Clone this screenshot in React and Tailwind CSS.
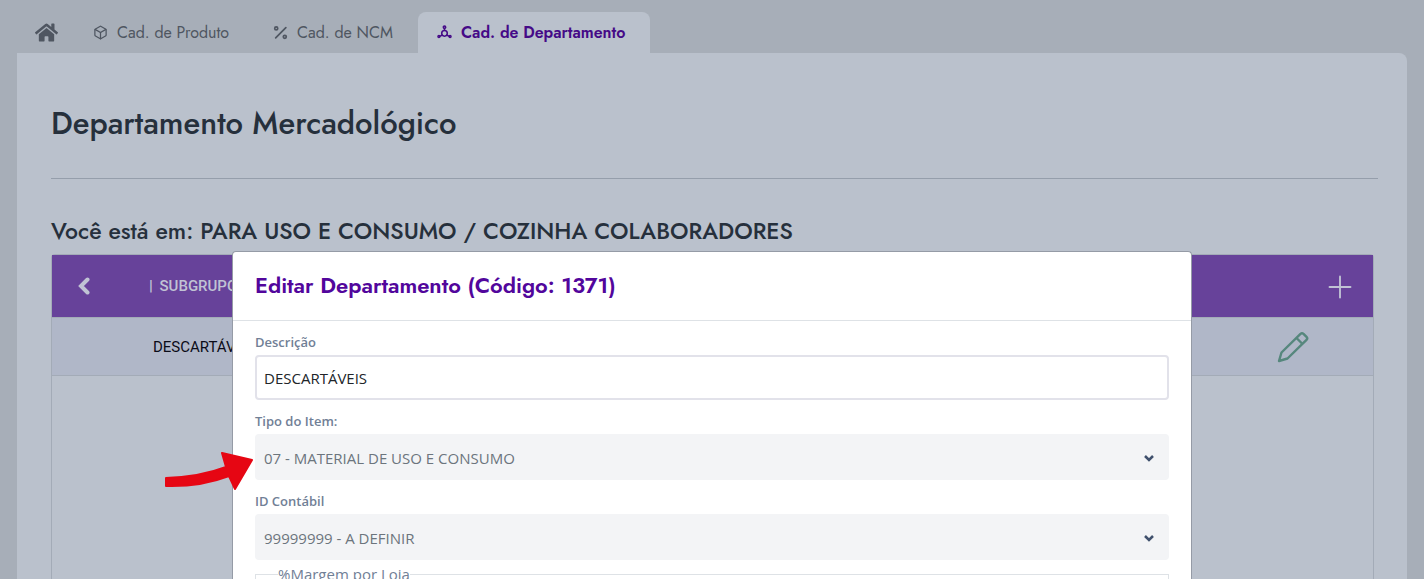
import { useState } from 'react';
import { FaHome } from 'react-icons/fa';
import { Box, Plus } from 'lucide-react';

const PercentIcon = ({ className }) => (
  <svg viewBox="0 0 14 14" className={className} fill="none" stroke="currentColor" strokeWidth="1.6">
    <path d="M12 2.500 2.500 12" strokeLinecap="round" />
    <circle cx="3" cy="3.2" r="1.4" />
    <circle cx="11" cy="11" r="1.4" />
  </svg>
);

const NodesIcon = ({ className }) => (
  <svg viewBox="0 0 14 14" className={className} fill="none" stroke="currentColor" strokeWidth="1.4">
    <circle cx="7" cy="2" r="1.1" />
    <circle cx="7" cy="7.8" r="2.6" />
    <circle cx="1.8" cy="10.8" r="0.9" />
    <circle cx="12.2" cy="10.8" r="0.9" />
    <path d="M7 3v2.500M5 9.300l-3 1.500M9 9.300l3 1.500" />
  </svg>
);

const PencilIcon = ({ className }) => (
  <svg
    viewBox="0 0 32 32"
    className={className}
    fill="none"
    stroke="currentColor"
    strokeWidth="2.4"
    strokeLinejoin="round"
  >
    <path d="M2 30L4.500 21.500L23.500 2.800Q25 1.500 26.500 2.800L29.500 5.800Q31 7.300 29.500 8.800L10.500 27.500Z" />
    <path d="M19.500 7L25 12.500" />
  </svg>
);

const tabs = [
  { id: 'produto', label: 'Cad. de Produto', icon: Box },
  { id: 'ncm', label: 'Cad. de NCM', icon: PercentIcon },
  { id: 'departamento', label: 'Cad. de Departamento', icon: NodesIcon },
];

function Tabs({ active, onChange }) {
  return (
    <nav className="flex h-[53px] items-end pl-[35px] font-['Jost','Lato',sans-serif] text-[16px] text-[#4f5661]">
      <a href="#inicio" aria-label="Início" className="flex h-[41px] items-center pr-4">
        <FaHome className="size-[23px]" />
      </a>
      {tabs.map(({ id, label, icon: Icon }) => (
        <button
          key={id}
          type="button"
          onClick={() => onChange(id)}
          className={`flex h-[41px] items-center gap-[9px] rounded-t-lg pr-[25px] pl-[19px] whitespace-nowrap ${
            active === id ? 'bg-[#bac1cc] font-semibold text-[#450a87]' : ''
          }`}
        >
          <Icon className="size-[15px]" />
          {label}
        </button>
      ))}
    </nav>
  );
}

function SelectField({ id, label, option }) {
  return (
    <div className="mt-3">
      <label htmlFor={id} className="block h-[22px] text-[13px] leading-[19px] font-semibold text-[#718096]">
        {label}
      </label>
      <div className="relative">
        <select
          id={id}
          className="block h-[46px] w-full appearance-none rounded bg-[#f3f4f6] px-[9px] pt-0.5 text-[15px] text-[#6c757d]"
        >
          <option>{option}</option>
        </select>
        <svg
          viewBox="0 0 10 7"
          className="pointer-events-none absolute top-[21px] right-[15px] h-[7px] w-[10px]"
          fill="none"
          stroke="#40516d"
          strokeWidth="2.5"
        >
          <path d="M1 1l4 4 4-4" />
        </svg>
      </div>
    </div>
  );
}

function EditarDepartamento() {
  const [descricao, setDescricao] = useState('DESCARTÁVEIS');

  return (
    <div
      role="dialog"
      aria-labelledby="modal-titulo"
      className="absolute inset-x-[232px] top-[251px] bottom-0 overflow-hidden rounded-t border border-b-0 border-[#959ba6] bg-white font-['Segoe_UI','Open_Sans',sans-serif]"
    >
      <header className="flex h-[69px] items-center border-b border-[#dee2e6] px-[22px] pb-0.5">
        <h2 id="modal-titulo" className="font-['Jost','Lato',sans-serif] text-[22px] font-semibold text-[#52069c]">
          Editar Departamento (Código: 1371)
        </h2>
      </header>
      <form className="px-[22px] pt-3">
        <label htmlFor="descricao" className="block h-[22px] text-[13px] leading-[19px] font-semibold text-[#718096]">
          Descrição
        </label>
        <input
          id="descricao"
          value={descricao}
          onChange={(e) => setDescricao(e.target.value)}
          className="block h-[45px] w-full rounded border-2 border-[#e2e2ea] px-[7px] text-[15px] text-[#212529]"
        />
        <SelectField id="tipo" label="Tipo do Item:" option="07 - MATERIAL DE USO E CONSUMO" />
        <SelectField id="contabil" label="ID Contábil" option="99999999 - A DEFINIR" />
        <fieldset className="mt-[3px] h-24 border border-[#dee2e6] px-[22px]">
          <legend className="text-[15px] text-[#718096]">%Margem por Loja</legend>
        </fieldset>
      </form>
    </div>
  );
}

function App() {
  const [tab, setTab] = useState('departamento');

  return (
    <div className="relative flex h-screen flex-col overflow-hidden bg-[#a7aeb8]">
      <Tabs active={tab} onChange={setTab} />
      <main className="mx-[17px] flex grow flex-col rounded-tr-lg bg-[#bac1cc] pr-[29px] pl-[34px] font-['Jost','Lato',sans-serif] text-[#26303c]">
        <h1 className="flex h-[126px] items-center border-b border-[#959eab] pt-[18px] text-[31px] font-medium">
          Departamento Mercadológico
        </h1>
        <h2 className="mt-9 h-[39px] text-[23px] leading-[32px] font-medium">
          Você está em: PARA USO E CONSUMO / COZINHA COLABORADORES
        </h2>
        <div className="mr-1 grow rounded-t border border-b-0 border-[#a3abb7] font-['Roboto',sans-serif] text-[15px]">
          <table className="w-full table-fixed text-left">
            <thead>
              <tr className="h-[62px] border-b border-[#a3abb7] bg-[#67429a] text-[#c0c3d4]">
                <th className="w-[97px] pl-[26px]">
                  <button type="button" aria-label="Voltar" className="block">
                    <svg viewBox="0 0 12 18" className="h-[18px] w-3" fill="none" stroke="currentColor" strokeWidth="4">
                      <path d="M9.500 2.500L3 9l6.500 6.500" strokeLinecap="round" />
                    </svg>
                  </button>
                </th>
                <th className="font-medium">
                  <span className="mr-[3px] font-bold">|</span> SUBGRUPO
                </th>
                <th className="w-[160px] pt-0.5">
                  <button type="button" aria-label="Adicionar" className="mr-[15px] ml-auto block">
                    <Plus className="size-9" strokeWidth={1.25} />
                  </button>
                </th>
              </tr>
            </thead>
            <tbody>
              <tr className="h-[58px] border-b border-[#a3abb7] bg-[#b0b7c8] text-[#0b0c18]">
                <td />
                <td className="pt-0.5 pl-1">DESCARTÁVEIS</td>
                <td className="pt-0.5">
                  <button type="button" aria-label="Editar" className="mx-auto block text-[#56877d]">
                    <PencilIcon className="size-8" />
                  </button>
                </td>
              </tr>
            </tbody>
          </table>
        </div>
      </main>
      <EditarDepartamento />
      <svg
        viewBox="0 0 88 38"
        className="pointer-events-none absolute top-[452px] left-[165px] h-[38px] w-[88px]"
        fill="#e60613"
        stroke="#e60613"
        strokeWidth="2"
        strokeLinejoin="round"
      >
        <path d="M1 26Q35 25 61 15L57 1L87 8L70 37L64 24Q35 35 1 34Z" />
      </svg>
    </div>
  );
}

export default App;
